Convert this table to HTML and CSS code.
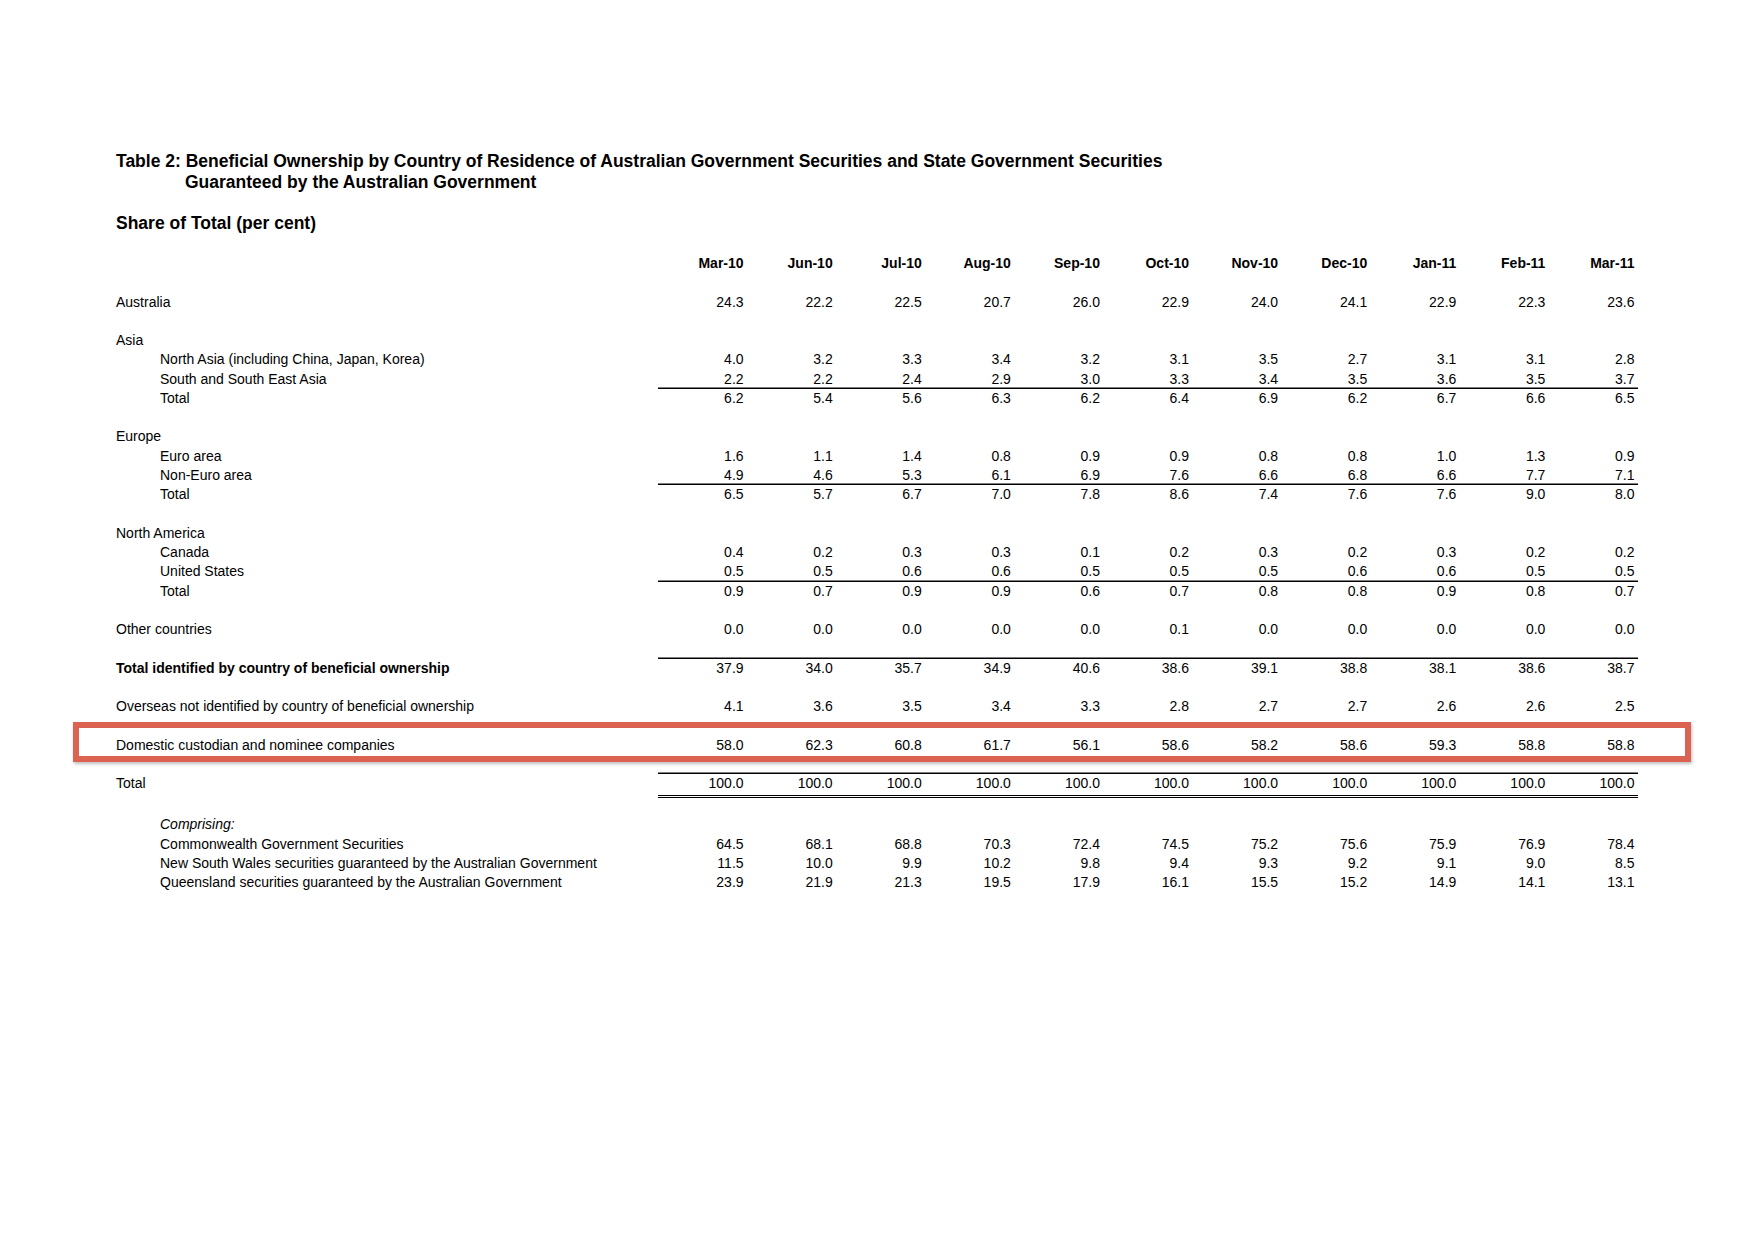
FILE: index.html
```html
<!DOCTYPE html>
<html lang="en">
<head>
<meta charset="utf-8">
<title>Table 2: Beneficial Ownership</title>
<link rel="stylesheet" href="styles.css">
</head>
<body>
<div class="page">
  <h1 class="title">
    <span class="title-line">Table 2: Beneficial Ownership by Country of Residence of Australian Government Securities and State Government Securities</span>
    <span class="title-line title-cont">Guaranteed by the Australian Government</span>
  </h1>
  <h2 class="subtitle">Share of Total (per cent)</h2>

  <div class="table">
    <div class="row head"><div class="label"></div><div class="nums"><span>Mar-10</span><span>Jun-10</span><span>Jul-10</span><span>Aug-10</span><span>Sep-10</span><span>Oct-10</span><span>Nov-10</span><span>Dec-10</span><span>Jan-11</span><span>Feb-11</span><span>Mar-11</span></div></div>
    <div class="row blank"></div>
    <div class="row"><div class="label">Australia</div><div class="nums"><span>24.3</span><span>22.2</span><span>22.5</span><span>20.7</span><span>26.0</span><span>22.9</span><span>24.0</span><span>24.1</span><span>22.9</span><span>22.3</span><span>23.6</span></div></div>
    <div class="row blank"></div>
    <div class="row"><div class="label">Asia</div><div class="nums"></div></div>
    <div class="row"><div class="label indent">North Asia (including China, Japan, Korea)</div><div class="nums"><span>4.0</span><span>3.2</span><span>3.3</span><span>3.4</span><span>3.2</span><span>3.1</span><span>3.5</span><span>2.7</span><span>3.1</span><span>3.1</span><span>2.8</span></div></div>
    <div class="row"><div class="label indent">South and South East Asia</div><div class="nums"><span>2.2</span><span>2.2</span><span>2.4</span><span>2.9</span><span>3.0</span><span>3.3</span><span>3.4</span><span>3.5</span><span>3.6</span><span>3.5</span><span>3.7</span></div></div>
    <div class="row rule"><div class="label indent">Total</div><div class="nums"><span>6.2</span><span>5.4</span><span>5.6</span><span>6.3</span><span>6.2</span><span>6.4</span><span>6.9</span><span>6.2</span><span>6.7</span><span>6.6</span><span>6.5</span></div></div>
    <div class="row blank"></div>
    <div class="row"><div class="label">Europe</div><div class="nums"></div></div>
    <div class="row"><div class="label indent">Euro area</div><div class="nums"><span>1.6</span><span>1.1</span><span>1.4</span><span>0.8</span><span>0.9</span><span>0.9</span><span>0.8</span><span>0.8</span><span>1.0</span><span>1.3</span><span>0.9</span></div></div>
    <div class="row"><div class="label indent">Non-Euro area</div><div class="nums"><span>4.9</span><span>4.6</span><span>5.3</span><span>6.1</span><span>6.9</span><span>7.6</span><span>6.6</span><span>6.8</span><span>6.6</span><span>7.7</span><span>7.1</span></div></div>
    <div class="row rule"><div class="label indent">Total</div><div class="nums"><span>6.5</span><span>5.7</span><span>6.7</span><span>7.0</span><span>7.8</span><span>8.6</span><span>7.4</span><span>7.6</span><span>7.6</span><span>9.0</span><span>8.0</span></div></div>
    <div class="row blank"></div>
    <div class="row"><div class="label">North America</div><div class="nums"></div></div>
    <div class="row"><div class="label indent">Canada</div><div class="nums"><span>0.4</span><span>0.2</span><span>0.3</span><span>0.3</span><span>0.1</span><span>0.2</span><span>0.3</span><span>0.2</span><span>0.3</span><span>0.2</span><span>0.2</span></div></div>
    <div class="row"><div class="label indent">United States</div><div class="nums"><span>0.5</span><span>0.5</span><span>0.6</span><span>0.6</span><span>0.5</span><span>0.5</span><span>0.5</span><span>0.6</span><span>0.6</span><span>0.5</span><span>0.5</span></div></div>
    <div class="row rule"><div class="label indent">Total</div><div class="nums"><span>0.9</span><span>0.7</span><span>0.9</span><span>0.9</span><span>0.6</span><span>0.7</span><span>0.8</span><span>0.8</span><span>0.9</span><span>0.8</span><span>0.7</span></div></div>
    <div class="row blank"></div>
    <div class="row"><div class="label">Other countries</div><div class="nums"><span>0.0</span><span>0.0</span><span>0.0</span><span>0.0</span><span>0.0</span><span>0.1</span><span>0.0</span><span>0.0</span><span>0.0</span><span>0.0</span><span>0.0</span></div></div>
    <div class="row blank"></div>
    <div class="row rule"><div class="label strong">Total identified by country of beneficial ownership</div><div class="nums"><span>37.9</span><span>34.0</span><span>35.7</span><span>34.9</span><span>40.6</span><span>38.6</span><span>39.1</span><span>38.8</span><span>38.1</span><span>38.6</span><span>38.7</span></div></div>
    <div class="row blank"></div>
    <div class="row"><div class="label">Overseas not identified by country of beneficial ownership</div><div class="nums"><span>4.1</span><span>3.6</span><span>3.5</span><span>3.4</span><span>3.3</span><span>2.8</span><span>2.7</span><span>2.7</span><span>2.6</span><span>2.6</span><span>2.5</span></div></div>
    <div class="row blank"></div>
    <div class="row highlight"><div class="label">Domestic custodian and nominee companies</div><div class="nums"><span>58.0</span><span>62.3</span><span>60.8</span><span>61.7</span><span>56.1</span><span>58.6</span><span>58.2</span><span>58.6</span><span>59.3</span><span>58.8</span><span>58.8</span></div></div>
    <div class="row blank"></div>
    <div class="row rule grand"><div class="label">Total</div><div class="nums"><span>100.0</span><span>100.0</span><span>100.0</span><span>100.0</span><span>100.0</span><span>100.0</span><span>100.0</span><span>100.0</span><span>100.0</span><span>100.0</span><span>100.0</span></div></div>
    <div class="row blank tall"></div>
    <div class="row"><div class="label indent italic">Comprising:</div><div class="nums"></div></div>
    <div class="row"><div class="label indent">Commonwealth Government Securities</div><div class="nums"><span>64.5</span><span>68.1</span><span>68.8</span><span>70.3</span><span>72.4</span><span>74.5</span><span>75.2</span><span>75.6</span><span>75.9</span><span>76.9</span><span>78.4</span></div></div>
    <div class="row"><div class="label indent">New South Wales securities guaranteed by the Australian Government</div><div class="nums"><span>11.5</span><span>10.0</span><span>9.9</span><span>10.2</span><span>9.8</span><span>9.4</span><span>9.3</span><span>9.2</span><span>9.1</span><span>9.0</span><span>8.5</span></div></div>
    <div class="row"><div class="label indent">Queensland securities guaranteed by the Australian Government</div><div class="nums"><span>23.9</span><span>21.9</span><span>21.3</span><span>19.5</span><span>17.9</span><span>16.1</span><span>15.5</span><span>15.2</span><span>14.9</span><span>14.1</span><span>13.1</span></div></div>
  </div>
</div>
</body>
</html>
```

FILE: styles.css
```css
html, body {
  margin: 0;
  padding: 0;
  background: #ffffff;
}

body {
  font-family: "Liberation Sans", Arial, sans-serif;
  color: #000000;
  font-size: 14px;
}

.page {
  padding: 151px 0 0 116px;
}

.title {
  margin: 0;
  font-size: 17.5px;
  font-weight: bold;
  line-height: 21px;
}

.title-line {
  display: block;
}

.title-cont {
  padding-left: 69px;
}

.subtitle {
  margin: 20px 0 0 0;
  font-size: 17.5px;
  font-weight: bold;
  line-height: 21px;
}

.table {
  margin-top: 20px;
  width: 1521.5px;
}

.row {
  display: grid;
  grid-template-columns: 541.5px 980px;
  height: 19.28px;
  line-height: 19.28px;
  white-space: nowrap;
}

.row.tall {
  height: 22px;
}

.label.indent {
  padding-left: 44px;
}

.label.strong {
  font-weight: bold;
}

.label.italic {
  font-style: italic;
}

.nums {
  display: grid;
  grid-template-columns: repeat(11, 1fr);
}

.nums span {
  text-align: right;
  padding-right: 3px;
}

.head .nums span {
  font-weight: bold;
}

.rule .nums {
  box-shadow: 0 -1.5px 0 #000000;
}

.grand .nums {
  box-shadow: 0 -1.5px 0 #000000, 0 2px 0 #ffffff, 0 3px 0 #000000, 0 4px 0 #ffffff, 0 5px 0 #000000;
}

.highlight {
  position: relative;
}

.highlight::after {
  content: "";
  position: absolute;
  left: -43px;
  right: -53.5px;
  top: -14px;
  bottom: -7px;
  border: 6px solid #dc6352;
  box-shadow: 1px 2px 3px rgba(0, 0, 0, 0.25);
  pointer-events: none;
}
```
